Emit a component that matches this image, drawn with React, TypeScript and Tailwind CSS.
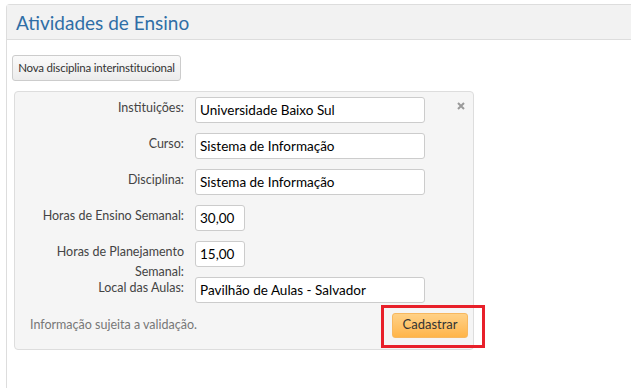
import React from 'react';

const font = { fontFamily: 'Lato, "Open Sans", "Liberation Sans", sans-serif' };

const rows = [
  { label: 'Instituições:', value: 'Universidade Baixo Sul', wide: true },
  { label: 'Curso:', value: 'Sistema de Informação', wide: true },
  { label: 'Disciplina:', value: 'Sistema de Informação', wide: true },
  { label: 'Horas de Ensino Semanal:', value: '30,00', wide: false },
  { label: 'Horas de Planejamento Semanal:', value: '15,00', wide: false },
  { label: 'Local das Aulas:', value: 'Pavilhão de Aulas - Salvador', wide: true },
];

export default function App() {
  return (
    <div className="w-[631px] h-[388px] bg-white overflow-hidden pl-[6px] pt-[4px]" style={font}>
      <div className="h-[400px] border-l border-t border-[#dddddd] rounded-tl-[4px]">
        <div className="h-[35px] bg-[#f2f2f2] border-b border-[#dddddd] pl-[9px] flex items-center">
          <h1 className="text-[19px] text-[#2f6ea6] leading-none">Atividades de Ensino</h1>
        </div>
        <div className="pl-[5px] pt-[14px]">
          <button className="h-[26px] w-[169px] whitespace-nowrap border border-[#cccccc] rounded-[3px] bg-gradient-to-b from-[#fafafa] to-[#ececec] text-[11.5px] tracking-[-0.2px] text-[#333333]">
            Nova disciplina interinstitucional
          </button>
          <div className="relative mt-[10px] ml-[2px] w-[460px] h-[259px] bg-[#f5f5f5] border border-[#dddddd] rounded-[4px] pt-[5px]">
            <svg className="absolute left-[442px] top-[10px]" width="8" height="8" viewBox="0 0 8 8">
              <path d="M1 1 L7 7 M7 1 L1 7" stroke="#9a9a9a" strokeWidth="2" />
            </svg>
            {rows.map((r) => (
              <div key={r.label} className="flex h-[26px] mb-[10px] last:mb-0">
                <div className="w-[169px] shrink-0 text-right text-[12.5px] leading-[20px] text-[#444444] pt-[1px] pl-[20px]">
                  {r.label}
                </div>
                <div className={`ml-[11px] h-[26px] ${r.wide ? 'w-[230px]' : 'w-[50px]'} bg-white border border-[#cccccc] rounded-[3px] pl-[4px] flex items-center text-[13.5px] text-black`}>
                  {r.value}
                </div>
              </div>
            ))}
            <div className="flex items-center justify-between mt-[10px] pl-[15px] pr-[5px]">
              <span className="text-[12.5px] text-[#777777]">Informação sujeita a validação.</span>
              <button className="h-[25px] w-[76px] rounded-[3px] border border-[#f7b860] bg-gradient-to-b from-[#ffd186] to-[#ffb548] text-[13px] text-[#333333]">
                Cadastrar
              </button>
            </div>
            <div className="absolute left-[366px] top-[213px] w-[104px] h-[43px] border-[3px] border-[#e8202a]" />
          </div>
        </div>
      </div>
    </div>
  );
}
